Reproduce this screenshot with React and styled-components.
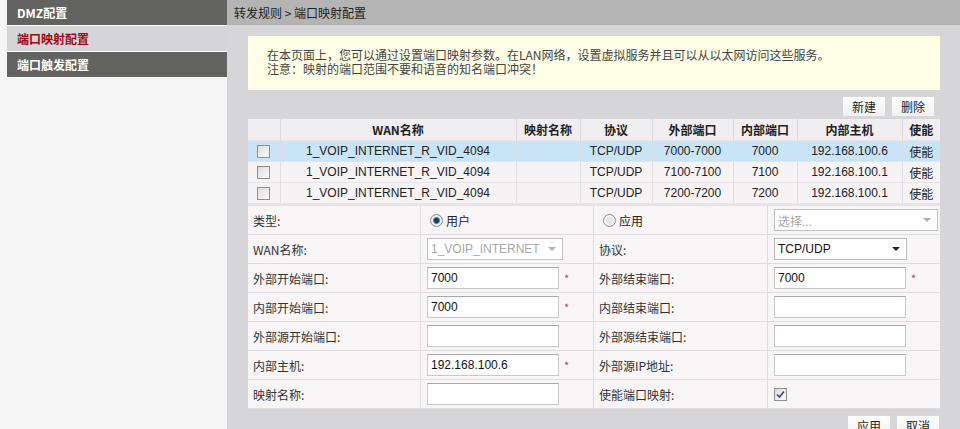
import React from "react"
import styled, { createGlobalStyle } from "styled-components"

const Global = createGlobalStyle`
  html, body { margin: 0; padding: 0; background: #f5f5f5; }
  body {
    font-family: "Liberation Sans", "Noto Sans CJK SC", sans-serif;
    font-size: 12px;
    color: #333;
  }
`

const Page = styled.div`
  display: flex;
  width: 960px;
  height: 429px;
  overflow: hidden;
`

const Side = styled.div`
  width: 220px;
  padding-left: 7px;
  background: #f5f5f5;
  display: flex;
  flex-direction: column;
`

const SideItem = styled.div`
  height: 25px;
  line-height: 25px;
  padding-left: 10px;
  border-bottom: 1px solid #fff;
  background: ${p => (p.active ? "#d5d4d6" : "#636361")};
  color: ${p => (p.active ? "#9b0a12" : "#fff")};
  font-weight: bold;
  font-size: 12px;
  font-family: "Noto Sans CJK SC", sans-serif;
`

const Main = styled.div`
  flex: 1;
  background: #d6d5d8;
  display: flex;
  flex-direction: column;
`

const Crumb = styled.div`
  height: 25px;
  line-height: 25px;
  background: #b4b4b4;
  padding-left: 7px;
  color: #222;
  font-family: "Noto Sans CJK SC", sans-serif;
`

const Content = styled.div`
  padding: 11px 20px 0 21px;
  display: flex;
  flex-direction: column;
`

const Info = styled.div`
  background: #fefee6;
  padding: 12px 20px 12px 19px;
  color: #444;
  height: 30px;
  font-family: "Noto Sans CJK SC", sans-serif;
`

const InfoLine = styled.div`
  height: 14px;
  line-height: 14px;
  white-space: nowrap;
`

const Actions = styled.div`
  display: flex;
  justify-content: flex-end;
  gap: 5px;
  padding: 6px 5px 2px 0;
`

const Btn = styled.button`
  height: 21px;
  min-width: 44px;
  padding: 0 8px;
  border: 1px solid #d7d7d7;
  background: linear-gradient(#ffffff, #f0f0f0);
  color: #222;
  font-size: 12px;
  font-family: "Noto Sans CJK SC", sans-serif;
`

const Table = styled.table`
  width: 692px;
  border-collapse: collapse;
  table-layout: fixed;
`

const Th = styled.th`
  height: 21px;
  padding: 0;
  background: #f0eef0;
  border-right: 1px solid #dad8da;
  font-weight: bold;
  font-size: 12px;
  color: #222;
  font-family: "Noto Sans CJK SC", sans-serif;
  &:last-child { border-right: none; }
`

const Tr = styled.tr`
  background: ${p => (p.sel ? "#c9e4f7" : "#f5f3f4")};
  border-top: 1px solid #e6e4e6;
`

const Td = styled.td`
  height: 20px;
  padding: 0;
  text-align: center;
  font-size: 12px;
  color: #222;
  border-right: 1px solid #e0dee0;
  font-family: "Liberation Sans", "Noto Sans CJK SC", sans-serif;
  &:last-child { border-right: none; }
`

const Box = styled.span`
  display: inline-block;
  width: 11px;
  height: 11px;
  border: 1px solid #8f8f8f;
  background: linear-gradient(135deg, #dcdcdc, #fafafa);
  vertical-align: middle;
  position: relative;
`

const Form = styled.div`
  display: grid;
  grid-template-columns: 173px 173px 174px 172px;
  width: 692px;
  background: #f7f5f6;
  border-top: 3px solid #e6e4e6;
`

const Cell = styled.div`
  height: 28px;
  display: flex;
  align-items: center;
  padding-left: ${p => (p.field ? "6px" : "5px")};
  border-bottom: 1px solid #dedcde;
  border-right: ${p => (p.split ? "1px solid #dedcde" : "none")};
  color: #333;
  font-family: "Noto Sans CJK SC", sans-serif;
`

const Input = styled.div`
  width: 127px;
  height: 20px;
  line-height: 20px;
  padding-left: 3px;
  background: #fff;
  border: 1px solid #c8c8c8;
  border-top-color: #a8a8a8;
  font-family: "Liberation Sans", sans-serif;
  color: #111;
`

const Select = styled.div`
  width: ${p => p.w || 125}px;
  height: 20px;
  padding: 0 6px 0 3px;
  background: #fff;
  border: 1px solid ${p => (p.dim ? "#c0c0c0" : "#bdbdbd")};
  display: flex;
  align-items: center;
  justify-content: space-between;
  color: ${p => (p.dim ? "#a8a8a8" : "#111")};
  font-family: "Liberation Sans", "Noto Sans CJK SC", sans-serif;
`

const Caret = styled.span`
  width: 0;
  height: 0;
  border-left: 4px solid transparent;
  border-right: 4px solid transparent;
  border-top: 4px solid ${p => (p.dim ? "#b0b0b0" : "#222")};
`

const Star = styled.span`
  color: #b4436a;
  font-size: 11px;
  margin-left: 5px;
`

const Radio = styled.span`
  display: inline-flex;
  align-items: center;
  gap: 3px;
  padding-left: 4px;
  color: #222;
`

const Dot = styled.span`
  width: 11px;
  height: 11px;
  border-radius: 50%;
  border: 1px solid #8a8a8a;
  background: ${p => (p.on
    ? "radial-gradient(circle, #1c3a56 0 2px, #4f88b7 3px, #e8eef4 4px)"
    : "radial-gradient(circle, #e6e6e6 0 3px, #fafafa 5px)")};
`

const Footer = styled.div`
  display: flex;
  justify-content: flex-end;
  gap: 5px;
  padding: 6px 0 0 0;
`

const rows = [
  { sel: true, proto: "TCP/UDP", ext: "7000-7000", inn: "7000", host: "192.168.100.6" },
  { proto: "TCP/UDP", ext: "7100-7100", inn: "7100", host: "192.168.100.1" },
  { proto: "TCP/UDP", ext: "7200-7200", inn: "7200", host: "192.168.100.1" },
]

const Field = ({ value, star, last }) => (
  <Cell field split={!last}>
    <Input>{value}</Input>
    {star && <Star>*</Star>}
  </Cell>
)

export default function App() {
  return (
    <Page>
      <Global />
      <Side>
        <SideItem>DMZ配置</SideItem>
        <SideItem active>端口映射配置</SideItem>
        <SideItem>端口触发配置</SideItem>
      </Side>
      <Main>
        <Crumb>转发规则 &gt; 端口映射配置</Crumb>
        <Content>
          <Info>
            <InfoLine>在本页面上，您可以通过设置端口映射参数。在LAN网络，设置虚拟服务并且可以从以太网访问这些服务。</InfoLine>
            <InfoLine>注意：映射的端口范围不要和语音的知名端口冲突！</InfoLine>
          </Info>
          <Actions>
            <Btn>新建</Btn>
            <Btn>删除</Btn>
          </Actions>
          <Table>
            <colgroup>
              <col style={{ width: 32 }} />
              <col style={{ width: 236 }} />
              <col style={{ width: 64 }} />
              <col style={{ width: 72 }} />
              <col style={{ width: 81 }} />
              <col style={{ width: 64 }} />
              <col style={{ width: 105 }} />
              <col style={{ width: 38 }} />
            </colgroup>
            <thead>
              <tr>
                <Th />
                <Th>WAN名称</Th>
                <Th>映射名称</Th>
                <Th>协议</Th>
                <Th>外部端口</Th>
                <Th>内部端口</Th>
                <Th>内部主机</Th>
                <Th>使能</Th>
              </tr>
            </thead>
            <tbody>
              {rows.map((r, i) => (
                <Tr key={i} sel={r.sel}>
                  <Td><Box /></Td>
                  <Td>1_VOIP_INTERNET_R_VID_4094</Td>
                  <Td />
                  <Td>{r.proto}</Td>
                  <Td>{r.ext}</Td>
                  <Td>{r.inn}</Td>
                  <Td>{r.host}</Td>
                  <Td>使能</Td>
                </Tr>
              ))}
            </tbody>
          </Table>
          <Form>
            <Cell split>类型:</Cell>
            <Cell split><Radio><Dot on />用户</Radio></Cell>
            <Cell split><Radio><Dot />应用</Radio></Cell>
            <Cell field><Select dim w={153}>选择...<Caret dim /></Select></Cell>

            <Cell split>WAN名称:</Cell>
            <Cell field split><Select dim>1_VOIP_INTERNET<Caret dim /></Select></Cell>
            <Cell split>协议:</Cell>
            <Cell field><Select w={122}>TCP/UDP<Caret /></Select></Cell>

            <Cell split>外部开始端口:</Cell>
            <Field value="7000" star />
            <Cell split>外部结束端口:</Cell>
            <Field value="7000" star last />

            <Cell split>内部开始端口:</Cell>
            <Field value="7000" star />
            <Cell split>内部结束端口:</Cell>
            <Field last />

            <Cell split>外部源开始端口:</Cell>
            <Field />
            <Cell split>外部源结束端口:</Cell>
            <Field last />

            <Cell split>内部主机:</Cell>
            <Field value="192.168.100.6" star />
            <Cell split>外部源IP地址:</Cell>
            <Field last />

            <Cell split>映射名称:</Cell>
            <Field />
            <Cell split>使能端口映射:</Cell>
            <Cell field><Box>
              <svg width="11" height="11" viewBox="0 0 11 11" style={{ position: "absolute", left: 0, top: 0 }}>
                <path d="M2 5.5 L4.5 8 L9 2.5" stroke="#3a4a6a" strokeWidth="1.6" fill="none" />
              </svg>
            </Box></Cell>
          </Form>
          <Footer>
            <Btn>应用</Btn>
            <Btn>取消</Btn>
          </Footer>
        </Content>
      </Main>
    </Page>
  )
}
